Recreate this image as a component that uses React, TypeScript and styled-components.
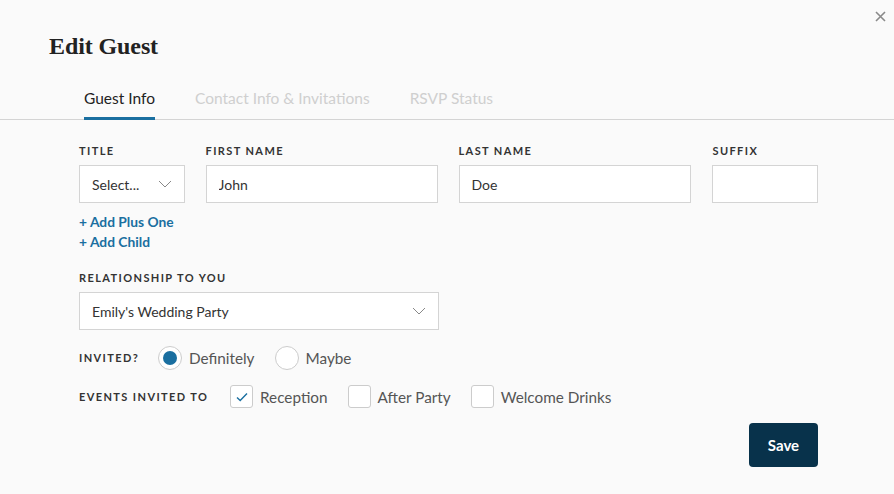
import React, { useState } from "react";
import styled, { createGlobalStyle } from "styled-components";

const GlobalStyle = createGlobalStyle`
    html, body {
        margin: 0;
        padding: 0;
        background: #fafafa;
    }
    * {
        box-sizing: border-box;
    }
`;

const Modal = styled('div')`
    position: relative;
    width: 894px;
    height: 494px;
    background: #fafafa;
    font-family: "Lato", "Open Sans", sans-serif;
    color: #333;
    overflow: hidden;
`;

const CloseBtn = styled('button')`
    position: absolute;
    top: 6px;
    right: 4px;
    width: 20px;
    height: 20px;
    padding: 0;
    border: none;
    background: transparent;
    cursor: pointer;
    display: flex;
    align-items: center;
    justify-content: center;
`;

const Header = styled('div')`
    padding: 32px 0 0 49px;
`;

const Title = styled('h1')`
    margin: 0;
    font-family: "Liberation Serif", "DejaVu Serif", serif;
    font-weight: 700;
    font-size: 24px;
    line-height: 28px;
    color: #222;
    letter-spacing: -0.1px;
`;

const TabBar = styled('div')`
    display: flex;
    gap: 40px;
    padding-left: 84px;
    margin-top: 25px;
    border-bottom: 1px solid #d4d4d4;
`;

const Tab = styled('div')<{ $active?: boolean }>`
    font-size: 15.5px;
    line-height: 20px;
    padding: 3px 0 9px;
    color: ${p => p.$active ? '#222' : '#cfcfcf'};
    border-bottom: 3px solid ${p => p.$active ? '#1a6fa0' : 'transparent'};
    margin-bottom: -1px;
    cursor: pointer;
`;

const Form = styled('div')`
    width: 739px;
    margin-left: 79px;
    padding-top: 24px;
    display: flex;
    flex-direction: column;
`;

const NameRow = styled('div')`
    display: flex;
    gap: 21px;
`;

const Field = styled('div')<{ $w: number }>`
    width: ${p => p.$w}px;
    display: flex;
    flex-direction: column;
    gap: 7px;
`;

const Label = styled('label')`
    font-size: 11px;
    line-height: 14px;
    font-weight: 700;
    letter-spacing: 1.4px;
    text-transform: uppercase;
    color: #333;
    white-space: nowrap;
`;

const Input = styled('input')`
    width: 100%;
    height: 38px;
    border: 1px solid #d4d4d4;
    background: #fff;
    padding: 0 12px;
    font-family: inherit;
    font-size: 14px;
    color: #333;
    outline: none;
`;

const SelectBox = styled('div')<{ $w?: number }>`
    width: ${p => p.$w ? `${p.$w}px` : '100%'};
    height: 38px;
    border: 1px solid #d4d4d4;
    background: #fff;
    padding: 0 12px;
    display: flex;
    align-items: center;
    justify-content: space-between;
    font-size: 14px;
    color: #333;
    cursor: pointer;
`;

const Links = styled('div')`
    margin-top: 9px;
    display: flex;
    flex-direction: column;
`;

const AddLink = styled('a')`
    font-size: 13.8px;
    line-height: 20px;
    font-weight: 700;
    color: #1a6fa0;
    text-decoration: none;
    cursor: pointer;
`;

const Section = styled('div')`
    margin-top: 19px;
    display: flex;
    flex-direction: column;
    gap: 7px;
`;

const OptionRow = styled('div')<{ $top: number }>`
    margin-top: ${p => p.$top}px;
    display: flex;
    align-items: center;
`;

const RowLabel = styled(Label)<{ $w: number }>`
    width: ${p => p.$w}px;
`;

const Option = styled('label')`
    display: flex;
    align-items: center;
    gap: 7px;
    margin-right: 20px;
    font-size: 15.3px;
    color: #555;
    cursor: pointer;
`;

const Radio = styled('span')<{ $on?: boolean }>`
    width: 24px;
    height: 24px;
    border-radius: 50%;
    border: 1px solid #ccc;
    background: #fff;
    display: flex;
    align-items: center;
    justify-content: center;

    &::after {
        content: "";
        display: ${p => p.$on ? 'block' : 'none'};
        width: 14px;
        height: 14px;
        border-radius: 50%;
        background: #1a6fa0;
    }
`;

const Check = styled('span')`
    width: 23px;
    height: 23px;
    border: 1px solid #ccc;
    border-radius: 3px;
    background: #fff;
    display: flex;
    align-items: center;
    justify-content: center;
`;

const Footer = styled('div')`
    margin-top: 15px;
    display: flex;
    justify-content: flex-end;
`;

const SaveBtn = styled('button')`
    width: 69px;
    height: 44px;
    border: none;
    border-radius: 4px;
    background: #08324b;
    color: #fff;
    font-family: inherit;
    font-size: 15px;
    font-weight: 700;
    cursor: pointer;
`;

const Chevron = () => (
    <svg width="14" height="8" viewBox="0 0 14 8" fill="none">
        <path d="M1 1l6 6 6-6" stroke="#888" strokeWidth="1" />
    </svg>
);

const Tick = () => (
    <svg width="12" height="10" viewBox="0 0 12 10" fill="none">
        <path d="M1 5.5l3.2 3L11 1.5" stroke="#1a6fa0" strokeWidth="1.4" />
    </svg>
);

const App = () => {
    const [invited, setInvited] = useState<string>('definitely');
    const [events, setEvents] = useState<string[]>(['Reception']);

    const toggleEvent = (name: string) => {
        setEvents(prev => prev.includes(name) ? prev.filter(e => e !== name) : [...prev, name]);
    };

    return (
        <Modal>
            <GlobalStyle />
            <CloseBtn aria-label="Close">
                <svg width="11" height="11" viewBox="0 0 11 11">
                    <path d="M1 1l9 9M10 1l-9 9" stroke="#8a8a8a" strokeWidth="1.6" />
                </svg>
            </CloseBtn>
            <Header>
                <Title>Edit Guest</Title>
            </Header>
            <TabBar>
                <Tab $active>Guest Info</Tab>
                <Tab>Contact Info &amp; Invitations</Tab>
                <Tab>RSVP Status</Tab>
            </TabBar>
            <Form>
                <NameRow>
                    <Field $w={106}>
                        <Label>Title</Label>
                        <SelectBox>
                            <span>Select...</span>
                            <Chevron />
                        </SelectBox>
                    </Field>
                    <Field $w={233}>
                        <Label>First Name</Label>
                        <Input defaultValue="John" />
                    </Field>
                    <Field $w={234}>
                        <Label>Last Name</Label>
                        <Input defaultValue="Doe" />
                    </Field>
                    <Field $w={106}>
                        <Label>Suffix</Label>
                        <Input />
                    </Field>
                </NameRow>
                <Links>
                    <AddLink>+ Add Plus One</AddLink>
                    <AddLink>+ Add Child</AddLink>
                </Links>
                <Section>
                    <Label>Relationship to you</Label>
                    <SelectBox $w={360}>
                        <span>Emily's Wedding Party</span>
                        <Chevron />
                    </SelectBox>
                </Section>
                <OptionRow $top={16}>
                    <RowLabel $w={79}>Invited?</RowLabel>
                    <Option onClick={() => setInvited('definitely')}>
                        <Radio $on={invited === 'definitely'} />
                        Definitely
                    </Option>
                    <Option onClick={() => setInvited('maybe')}>
                        <Radio $on={invited === 'maybe'} />
                        Maybe
                    </Option>
                </OptionRow>
                <OptionRow $top={15}>
                    <RowLabel $w={151}>Events invited to</RowLabel>
                    {['Reception', 'After Party', 'Welcome Drinks'].map(name => (
                        <Option key={name} onClick={() => toggleEvent(name)}>
                            <Check>{events.includes(name) && <Tick />}</Check>
                            {name}
                        </Option>
                    ))}
                </OptionRow>
                <Footer>
                    <SaveBtn>Save</SaveBtn>
                </Footer>
            </Form>
        </Modal>
    );
};

export default App;
